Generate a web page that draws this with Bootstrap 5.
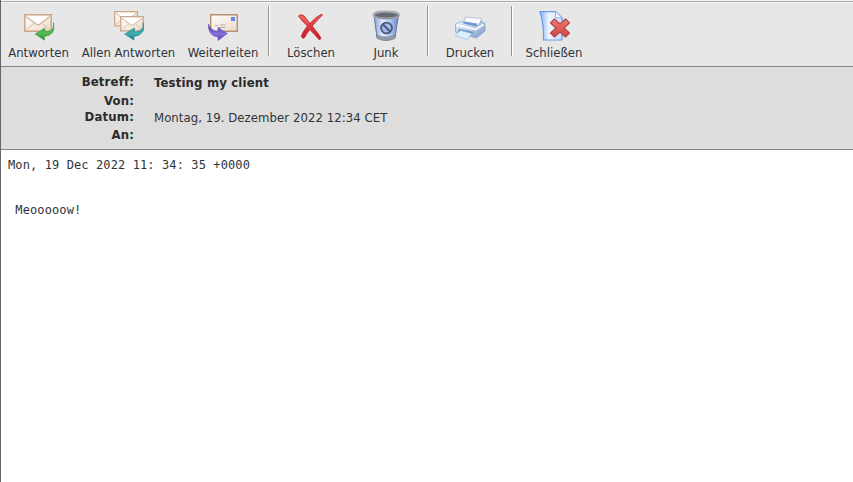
<!DOCTYPE html>
<html lang="de">
<head>
<meta charset="utf-8">
<title>Testing my client</title>
<link href="https://cdn.jsdelivr.net/npm/bootstrap@5.3.0/dist/css/bootstrap.min.css" rel="stylesheet">
<style>
body{font-family:"DejaVu Sans Condensed","DejaVu Sans",sans-serif;font-stretch:condensed;font-size:13px;line-height:18px;color:#30343a;border-left:1px solid #66666b;overflow:hidden}
.toolbar{height:67px;background:#e7e7e7;border-bottom:1px solid #858585;border-top:1px solid #f4f4f4;box-shadow:inset 0 1px #a5adaa,inset 0 2px #f3f5f4;padding-top:7px}
.tool{height:54px;padding:0;border:0;background:none;color:inherit;white-space:nowrap}
.tool svg{display:block;width:34px;height:34px;margin:0 auto}
.tool span{display:block;line-height:18px;padding-top:1px;margin-bottom:-1px}
.w-a{width:75px}.w-b{width:105px}.w-c{width:84px}.w-d{width:82px}.w-e{width:68px}
.divider{width:2px;height:50px;margin-top:-2px;background:linear-gradient(90deg,#94948e 50%,#fff 50%)}
.gap-s{margin-left:3px}.gap-l{margin-left:7px}
.meta{height:83px;background:#ddd;border-bottom:1px solid #858585;display:grid;grid-template-columns:133px 1fr;grid-template-rows:18px 17px 18px 18px;column-gap:20px;padding-top:7px}
.meta dt,.meta dd{margin:0;line-height:18px}
.meta dd{letter-spacing:.06px}
.meta dt,.meta .subject{font-weight:700;letter-spacing:.17px;color:#2b2b2b}
.meta .raised{margin-top:-1px}
.message{font:12px/15px "DejaVu Sans Mono",monospace;letter-spacing:.11px;padding:8px 7px;margin:0;overflow:hidden}
</style>
</head>
<body class="bg-white min-vh-100">
<svg width="0" height="0" class="position-absolute" aria-hidden="true">
<defs>
<linearGradient id="paper" x2="1" y2="1"><stop stop-color="#fff"/><stop offset="1" stop-color="#ecd9c7"/></linearGradient>
<linearGradient id="green" x2="0" y2="1"><stop stop-color="#278c35"/><stop offset=".6" stop-color="#55bc58"/><stop offset="1" stop-color="#258c34"/></linearGradient>
<linearGradient id="teal" x2="0" y2="1"><stop stop-color="#167f85"/><stop offset=".6" stop-color="#42adb0"/><stop offset="1" stop-color="#157c85"/></linearGradient>
<linearGradient id="violet" x2="0" y2="1"><stop stop-color="#49349e"/><stop offset=".6" stop-color="#8970dc"/><stop offset="1" stop-color="#5b3eb0"/></linearGradient>
<linearGradient id="red" x2="0" y2="1"><stop stop-color="#f05a57"/><stop offset="1" stop-color="#c51420"/></linearGradient>
<linearGradient id="softred" x2="0" y2="1"><stop stop-color="#ee7a70"/><stop offset="1" stop-color="#d4443f"/></linearGradient>
<linearGradient id="can"><stop stop-color="#7f9fdd"/><stop offset=".35" stop-color="#e2edff"/><stop offset=".65" stop-color="#b2ccf8"/><stop offset="1" stop-color="#6485c4"/></linearGradient>
<linearGradient id="sheet"><stop stop-color="#86b1f5"/><stop offset=".4" stop-color="#eef6ff"/><stop offset="1" stop-color="#c8ddff"/></linearGradient>
<linearGradient id="printer" x2="1" y2="1"><stop stop-color="#f1f6fc"/><stop offset=".5" stop-color="#b2c8e6"/><stop offset="1" stop-color="#7c97c0"/></linearGradient>
<g id="envelope"><path d="M.8.8h26.4v16.4H.8z" fill="url(#paper)" stroke="#c9a78a" stroke-width="1.500"/><path d="M2 16l8.500-7M26 16l-8.500-7" fill="none" stroke="#dbc0a9"/><path d="M2 2.500l10.500 7.800q1.500 1 3 0L26 2.500" fill="#fff" stroke="#ccb19b" stroke-width="1.100"/></g>
<path id="replyarrow" d="M18.500 0q1.500 9-8.500 9.300V5.400L0 11.500l9.500 6.200v-3.700Q21.500 12.500 18.500 0z"/>
</defs>
</svg>

<nav class="toolbar d-flex" aria-label="Nachricht">
<button class="tool w-a"><svg viewBox="0 0 34 34"><use href="#envelope" x="2" y="5"/><use href="#replyarrow" x="13" y="13.500" fill="url(#green)" stroke="#369641" stroke-width=".5"/></svg><span>Antworten</span></button>
<button class="tool w-b"><svg viewBox="0 0 34 34"><use href="#envelope" transform="translate(2 2) scale(.86)"/><use href="#envelope" transform="translate(8 7) scale(.86)"/><use href="#replyarrow" x="12.500" y="13.500" fill="url(#teal)" stroke="#24888e" stroke-width=".5"/></svg><span>Allen Antworten</span></button>
<button class="tool w-c"><svg viewBox="0 0 34 34"><path d="M4.700 5.700h26.600v16.600H4.700z" fill="url(#paper)" stroke="#b98f72" stroke-width="1.400"/><path d="M25 8h4v4h-4z" fill="#6389ea"/><path d="M9 16.500h3m1.500-.5h6M12 18.500h7" stroke="#b9aaa0" stroke-width="1.200"/><path d="M2.500 15q-1 11.500 9.500 13v3.500l9.500-7-9.500-6v4Q5 22 2.500 15z" fill="url(#violet)" stroke="#6750b7" stroke-width=".5"/></svg><span>Weiterleiten</span></button>
<div class="divider gap-s"></div>
<button class="tool w-d"><svg viewBox="0 0 34 34"><path d="M4.500 7q2-2.500 5.500 0l6 7.500q5-6 11-9l1.500.5q-5 4.500-10.500 11 5 5.500 9 12l-1.500 2q-5-5.500-9.500-10.500Q11.500 25.500 11 28q-1.500 2.500-3.500 0 0-3.500 6-11Q8 12 4.500 7z" fill="url(#red)" stroke="#c82f32" stroke-width="1"/><path d="M6 6.700q3 1 8 8" fill="none" stroke="#f78b85" stroke-width=".8"/></svg><span>Löschen</span></button>
<button class="tool w-e"><svg viewBox="0 0 34 34"><path d="M5 6l3 22.500q9 5.500 18 0L29.500 6z" fill="url(#can)" stroke="#68779b"/><path d="M7.500 26q9.500 4 19 0l-.5 3.500q-9 4-18 0z" fill="#939aaa" stroke="#6f7687" stroke-width=".5"/><ellipse cx="17.300" cy="6" rx="12.700" ry="3.400" fill="#666b73" stroke="#a9adb3" stroke-width="2"/><path d="M5 6.800q12 6 25 0" fill="none" stroke="#7b828f" stroke-width=".8"/><circle cx="17.500" cy="19" r="5.400" fill="#a2baf0" stroke="#4c5a76" stroke-width="1.900"/><path d="M13.800 15.300l7.500 7.500" stroke="#4c5a76" stroke-width="2"/></svg><span>Junk</span></button>
<div class="divider gap-l"></div>
<button class="tool w-d"><svg viewBox="0 0 34 34"><path d="M12.500 8l16 1.500-2 8-16-3z" fill="#fafcff" stroke="#a4adb9" stroke-width=".7"/><path d="M2.500 16q0-2.500 4-2.500L10 12l1 2 14 3 3-5 3.500 2q1 1 .5 8l-8.500 7-21-6z" fill="url(#printer)" stroke="#849fc5" stroke-width=".7"/><path d="M12 12.500l13 2.200-2 2.500-13-2.700z" fill="#6b98d4"/><path d="M3.500 16l19 4.500 8-5" fill="none" stroke="#f8fbff" stroke-width="2"/><path d="M6 20l14 3-1 3-14-3z" fill="#668bb8"/><path d="M7.500 21.500l11.500 3-5 6-12-4z" fill="#d9f1ff" stroke="#8dbbe8" stroke-width=".7"/></svg><span>Drucken</span></button>
<div class="divider"></div>
<button class="tool w-d"><svg viewBox="0 0 34 34"><path d="M3 2.700h15.500l6.500 6V31H6.500Q7 15 3 2.700z" fill="url(#sheet)" stroke="#6c9aea" stroke-width="1.200"/><path d="M18.500 2.700v6H25z" fill="#fff" stroke="#7ba4ed" stroke-width=".8"/><path d="M17.500 10l5.500 5 5.500-5 4 4-5.500 5 5.500 5-4 4-5.500-5-5.500 5-4-4 5.500-5-5.500-5z" fill="url(#softred)" stroke="#b6484a" stroke-width="1.200" stroke-linejoin="round"/></svg><span>Schließen</span></button>
</nav>

<dl class="meta mb-0">
<dt class="text-end raised">Betreff:</dt><dd class="subject">Testing my client</dd>
<dt class="text-end">Von:</dt><dd></dd>
<dt class="text-end raised">Datum:</dt><dd>Montag, 19. Dezember 2022 12:34 CET</dd>
<dt class="text-end raised">An:</dt><dd></dd>
</dl>
<pre class="message">Mon, 19 Dec 2022 11: 34: 35 +0000


 Meooooow!</pre>
<script src="https://cdn.jsdelivr.net/npm/bootstrap@5.3.0/dist/js/bootstrap.bundle.min.js"></script>
</body>
</html>
